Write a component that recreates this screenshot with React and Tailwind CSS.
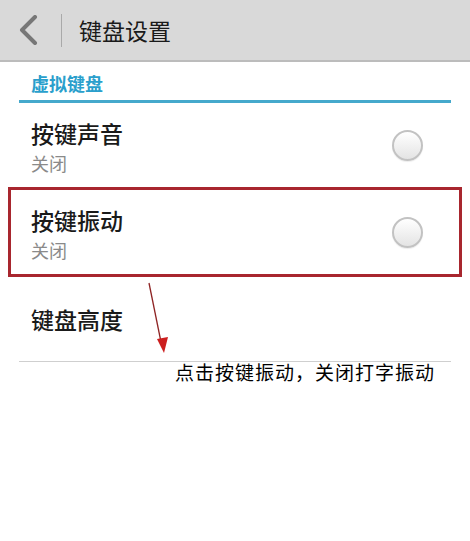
export default function App() {
  const cjk = { fontFamily: '"Noto Sans CJK SC", "Noto Sans", sans-serif' };

  return (
    <div className="relative w-[470px] h-[541px] bg-white overflow-hidden" style={cjk}>
      {/* header */}
      <header className="h-[62px] bg-[#d9d9d9] border-b-2 border-[#bcbcbc] flex items-center pl-[18px]">
        <svg width="20" height="30" viewBox="0 0 20 30" className="shrink-0">
          <path d="M17 2 L4 15 L17 28" fill="none" stroke="#777777" strokeWidth="4" strokeLinecap="round" strokeLinejoin="round" />
        </svg>
        <div className="ml-[23px] w-px h-[33px] bg-[#a9a9a9]" />
        <h1 className="ml-[17px] text-[23px] leading-[28px] text-[#1a1a1a]">键盘设置</h1>
      </header>

      {/* section title */}
      <div className="h-[38px] flex items-center pl-[31px] pt-[4px]">
        <span className="text-[18px] leading-[22px] font-bold text-[#2a9fcc]">虚拟键盘</span>
      </div>
      <div className="mx-[19px] h-[3px] bg-[#45a9cc]" />

      <div className="h-[84px] flex items-center justify-between pl-[31px] pr-[47px]">
        <div className="pt-[2px]">
          <div className="text-[23px] leading-[28px] font-medium text-[#1a1a1a]">按键声音</div>
          <div className="mt-[5px] text-[18px] leading-[22px] text-[#8a8a8a]">关闭</div>
        </div>
        <Radio />
      </div>

      <div className="mx-[8px] h-[90px] border-[3px] border-[#a8262e] flex items-center justify-between pl-[20px] pr-[36px]">
        <div className="pt-[2px]">
          <div className="text-[23px] leading-[28px] font-medium text-[#1a1a1a]">按键振动</div>
          <div className="mt-[5px] text-[18px] leading-[22px] text-[#8a8a8a]">关闭</div>
        </div>
        <Radio />
      </div>

      <div className="h-[84px] flex items-center pl-[31px]">
        <div className="text-[23px] leading-[28px] font-medium text-[#1a1a1a]">键盘高度</div>
      </div>
      <div className="mx-[19px] h-px bg-[#cfcfcf]" />

      {/* annotation arrow */}
      <svg className="absolute left-[140px] top-[280px]" width="40" height="80" viewBox="0 0 40 80">
        <line x1="9" y1="3" x2="21" y2="62" stroke="#8f2424" strokeWidth="1.3" />
        <polygon points="17,59 28,57 24,73" fill="#cc1f1f" />
      </svg>

      <div className="absolute left-[175px] top-[361px] text-[19px] leading-[22px] tracking-[1px] text-black">
        点击按键振动，关闭打字振动
      </div>
    </div>
  );
}

function Radio() {
  return (
    <div className="w-[31px] h-[31px] rounded-full border-2 border-[#c2c2c2] bg-gradient-to-b from-white to-[#e4e4e4] shadow-[0_1px_1px_rgba(0,0,0,0.08)] shrink-0" />
  );
}
